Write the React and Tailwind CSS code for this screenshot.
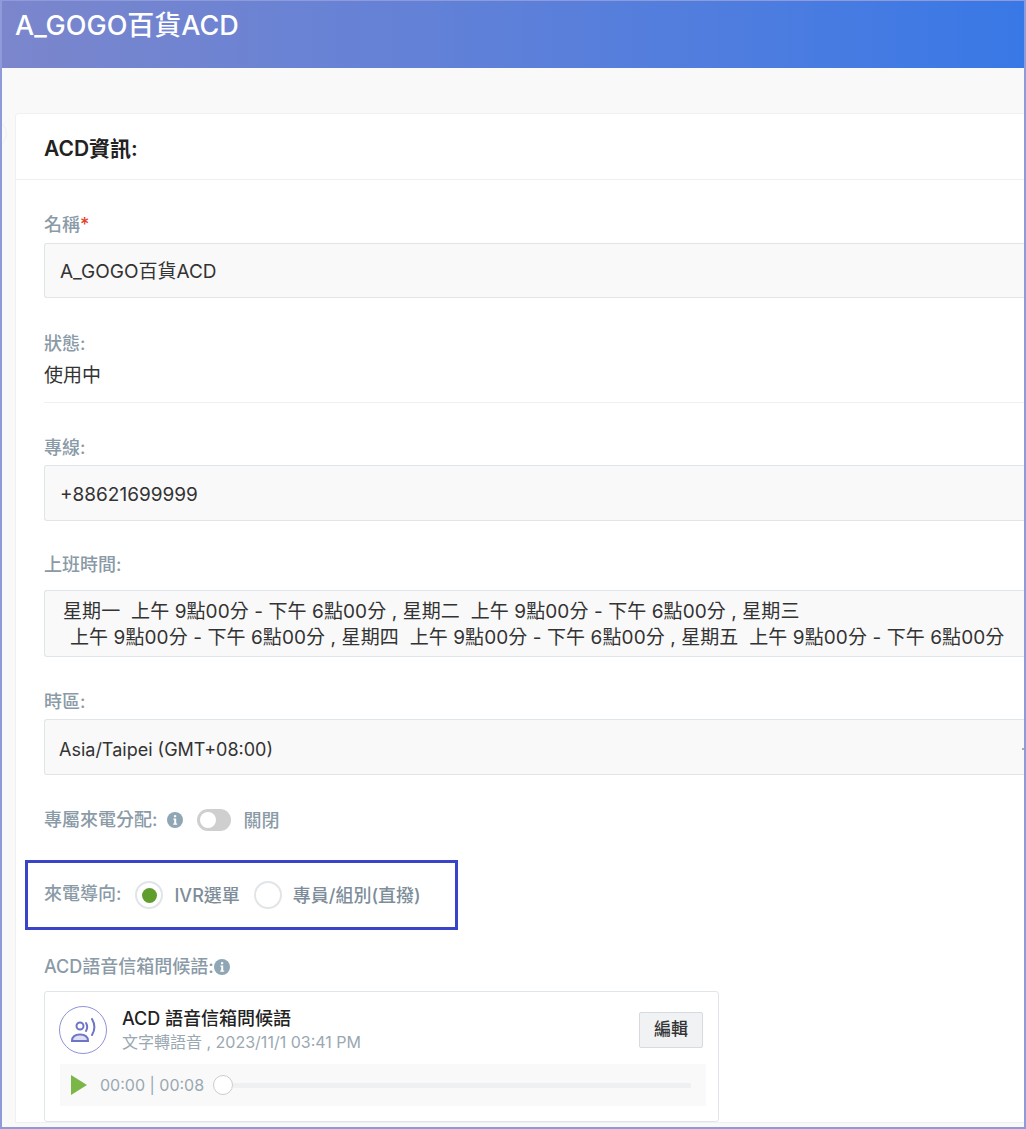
import React from "react";

const font = { fontFamily: '"Inter", "Noto Sans CJK TC", sans-serif' };

function InfoIcon({ className }) {
  return (
    <svg viewBox="0 0 16 16" className={className}>
      <circle cx="8" cy="8" r="8" fill="#8fa6b5" />
      <rect x="7" y="3.200" width="2.200" height="2" fill="#fff" />
      <path d="M6.400 6.600h2.800v5h1v1.200H6.200v-1.200h1v-3.800h-.8z" fill="#fff" />
    </svg>
  );
}

function Label({ children, className = "" }) {
  return <div className={`text-[18px] font-medium leading-[24px] text-[#8a9aa6] ${className}`}>{children}</div>;
}

function Box({ children, className }) {
  return (
    <div className={`flex items-center border border-r-0 border-[#dfe5e9] bg-[#f9f9f9] rounded-l-[3px] text-[#333] ${className}`}>
      {children}
    </div>
  );
}

function Radio({ checked }) {
  return (
    <span className="flex h-[28px] w-[28px] items-center justify-center rounded-full border-2 border-[#dfe5e9] bg-white">
      {checked && <span className="h-[15px] w-[15px] rounded-full bg-[#5f9e2d]" />}
    </span>
  );
}

export default function App() {
  return (
    <div style={font} className="h-[1129px] w-[1026px] overflow-hidden border-x-2 border-b-2 border-t border-[#8e9ad9] bg-[#f9f9f9]">
      <div className="flex h-[67px] items-start bg-gradient-to-r from-[#7b86cc] to-[#3878e6] pl-[13px] pt-[9px] text-[27px] font-medium leading-[32px] text-white">
        A_GOGO百貨ACD
      </div>

      <div className="relative mt-[45px] ml-[13px] rounded-tl-[4px] border border-r-0 border-[#f0f0f0] bg-white">
        <span className="absolute -left-[36px] top-[6px] h-[27px] w-[27px] rounded-full border border-[#efefef]" />
        <div className="flex h-[66px] items-center border-b border-[#f0f0f0] pl-[28px] pt-[4px] text-[21px] font-semibold text-[#222]">
          ACD資訊:
        </div>

        <div className="pl-[28px] pt-[32px]">
          <Label className="translate-y-[1px]">
            名稱<span className="text-[#e8402a]">*</span>
          </Label>
          <Box className="mt-[7px] h-[55px] pl-[15px] pt-[4px] text-[19px]">A_GOGO百貨ACD</Box>

          <div className="mt-[33px]">
            <Label className="translate-y-[1px]">狀態:</Label>
          </div>
          <div className="mt-[8px] border-b border-[#eef0f2] pb-[15px] pt-[1px] text-[19px] leading-[23px] text-[#333]">使用中</div>

          <div className="mt-[32px]">
            <Label className="translate-y-[1px]">專線:</Label>
          </div>
          <Box className="mt-[6px] h-[56px] pl-[15px] pt-[4px] text-[19px]">+88621699999</Box>

          <div className="mt-[32px]">
            <Label>上班時間:</Label>
          </div>
          <Box className="mt-[13px] h-[67px] pl-[18px] pt-[2px] text-[19px]">
            <div className="whitespace-pre leading-[26px] tracking-[0.08px]">
              <div>星期一  上午 9點00分 - 下午 6點00分 , 星期二  上午 9點00分 - 下午 6點00分 , 星期三</div>
              <div className="pl-[7px]">上午 9點00分 - 下午 6點00分 , 星期四  上午 9點00分 - 下午 6點00分 , 星期五  上午 9點00分 - 下午 6點00分</div>
            </div>
          </Box>

          <div className="mt-[32px]">
            <Label className="translate-y-[1px]">時區:</Label>
          </div>
          <Box className="mt-[6px] h-[56px] pl-[14px] pt-[4px] text-[18px]">
            Asia/Taipei (GMT+08:00)
            <span className="ml-auto h-[2px] w-[2px] bg-[#aaa]" />
          </Box>

          <div className="mt-[33px] flex h-[24px] items-center">
            <Label>專屬來電分配:</Label>
            <InfoIcon className="ml-[10px] h-[16px] w-[16px]" />
            <span className="ml-[14px] flex h-[22px] w-[34px] items-center rounded-full bg-[#cfcfcf] pl-[3px]">
              <span className="h-[16px] w-[16px] rounded-full bg-white" />
            </span>
            <span className="ml-[12px] text-[18px] font-medium text-[#8a9aa6]">關閉</span>
          </div>

          <div className="relative mt-[28px] flex h-[70px] items-center">
            <span className="pointer-events-none absolute -left-[19px] top-0 h-[70px] w-[433px] border-[3px] border-[#3a44c8]" />
            <Label className="-translate-y-[1px]">來電導向:</Label>
            <span className="ml-[14px]"><Radio checked /></span>
            <span className="ml-[11px] text-[18px] font-medium text-[#7d8d99]">IVR選單</span>
            <span className="ml-[14px]"><Radio /></span>
            <span className="ml-[11px] text-[18px] font-medium text-[#7d8d99]">專員/組別(直撥)</span>
          </div>

          <div className="mt-[24px] flex items-center">
            <Label className="translate-y-[1px]">ACD語音信箱問候語:</Label>
            <InfoIcon className="translate-y-[1px] h-[16px] w-[16px]" />
          </div>

          <div className="mt-[13px] h-[131px] w-[675px] rounded-[3px] border border-[#dfe5e9] bg-white px-[15px] pt-[14px]">
            <div className="flex items-start">
              <span className="-ml-[1px] flex h-[48px] w-[48px] items-center justify-center rounded-full border-[1.5px] border-[#8f93d8]">
                <svg viewBox="0 0 25 24" className="h-[24px] w-[25px]" fill="none" stroke="#6f75c6" strokeWidth="2" strokeLinecap="round">
                  <circle cx="9" cy="8" r="3.500" />
                  <path d="M1 23c0-4.500 3.500-6.500 8-6.500s8 2 8 6.500z" fill="#dfe0f4" />
                  <path d="M15 5c1.500 2.500 1.500 5.500 0 8" />
                  <path d="M21 1c3 5 3 11 0 16" />
                </svg>
              </span>
              <div className="ml-[15px] flex-1 pt-[1px]">
                <div className="text-[18px] font-medium leading-[24px] text-[#222]">ACD 語音信箱問候語</div>
                <div className="text-[16px] leading-[22px] text-[#9aa8b2]">文字轉語音 , 2023/11/1 03:41 PM</div>
              </div>
              <button className="mt-[6px] h-[36px] w-[64px] rounded-[2px] border border-[#d5dbdf] bg-[#f0f2f3] text-[17px] font-medium text-[#333]">
                編輯
              </button>
            </div>
            <div className="mt-[10px] flex h-[42px] w-[646px] items-center bg-[#f9f9f9] pl-[11px] pr-[15px]">
              <svg viewBox="0 0 16 20" className="h-[20px] w-[16px]">
                <path d="M0 0 L16 10 L0 20z" fill="#7ab648" />
              </svg>
              <span className="ml-[13px] text-[16px] text-[#9aa8b2]">00:00 | 00:08</span>
              <span className="ml-[9px] h-[20px] w-[20px] rounded-full border border-[#ccc] bg-white" />
              <span className="h-[5px] flex-1 bg-[#eef0f1]" />
            </div>
          </div>
        </div>
      </div>
    </div>
  );
}
